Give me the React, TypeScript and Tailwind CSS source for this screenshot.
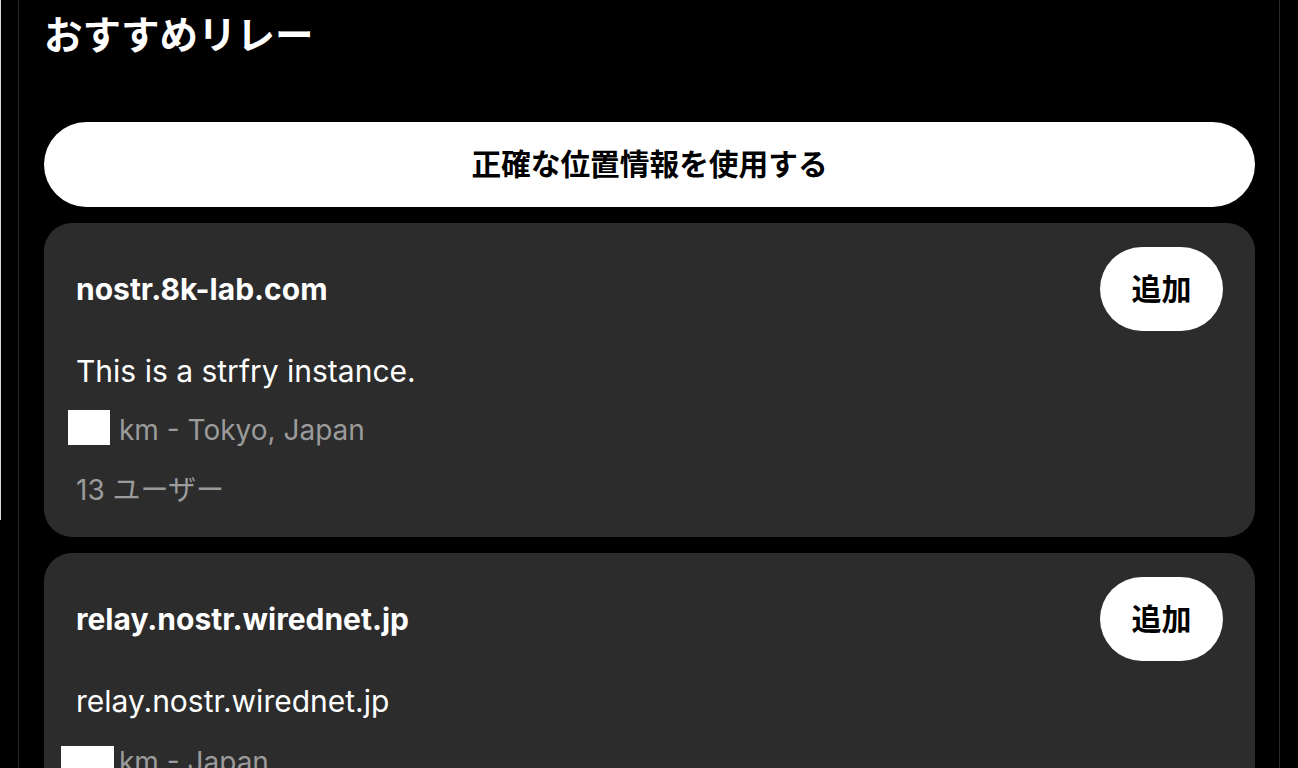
import { clsx } from "clsx";

type Relay = {
  url: string;
  description: string;
  location: string;
  users?: number;
  flagClass: string;
  textClass: string;
};

const relays: Relay[] = [
  {
    url: "nostr.8k-lab.com",
    description: "This is a strfry instance.",
    location: "km - Tokyo, Japan",
    users: 13,
    flagClass: "w-[42px] h-[35px] ml-[-8px] mr-[9px] mt-[1px]",
    textClass: "",
  },
  {
    url: "relay.nostr.wirednet.jp",
    description: "relay.nostr.wirednet.jp",
    location: "km - Japan",
    flagClass: "w-[53px] h-[40px] ml-[-15px] mr-[5px] mt-[7px]",
    textClass: "mt-[2px]",
  },
];

const RelayCard = ({ relay }: { relay: Relay }) => {
  return (
    <div className="rounded-[28px] bg-[#2c2c2c] px-8 pt-6 pb-[26px]">
      <div className="flex flex-row items-center justify-between">
        <p className="text-[30px] font-bold leading-[45px] text-white">{relay.url}</p>
        <button className="flex h-[84px] w-[123px] shrink-0 items-center justify-center rounded-full bg-white text-[30px] font-bold text-black">
          追加
        </button>
      </div>
      <p className="mt-[17px] text-[30px] leading-[46px] text-white">{relay.description}</p>
      <div className="mt-[15px] flex flex-row items-start">
        <div className={clsx("shrink-0 bg-white", relay.flagClass)} />
        <p className={clsx("text-[28px] leading-[42px] text-[#9b9b9b]", relay.textClass)}>{relay.location}</p>
      </div>
      {relay.users !== undefined && (
        <p className="mt-[18px] text-[28px] leading-[42px] text-[#9b9b9b]">{relay.users} ユーザー</p>
      )}
    </div>
  );
};

export default function App() {
  return (
    <div
      className="flex h-screen w-full flex-row items-start overflow-hidden bg-black"
      style={{ fontFamily: 'Inter, "Noto Sans CJK JP", sans-serif' }}
    >
      <div className="h-[520px] w-px shrink-0 bg-[#d9d9d9]" />
      <div className="ml-[17px] min-h-screen w-[1262px] shrink-0 border-x border-[#2a2a2a] pl-[25px] pr-[24px]">
        <h1 className="pt-[6px] text-[38.5px] font-bold leading-[58px] text-white">おすすめリレー</h1>
        <button className="mt-[58px] flex h-[85px] w-full items-center justify-center rounded-full bg-white text-[29.7px] font-bold text-black">
          正確な位置情報を使用する
        </button>
        <div className="mt-4 flex flex-col gap-4">
          {relays.map((r, k) => (
            <RelayCard key={k} relay={r} />
          ))}
        </div>
      </div>
    </div>
  );
}
